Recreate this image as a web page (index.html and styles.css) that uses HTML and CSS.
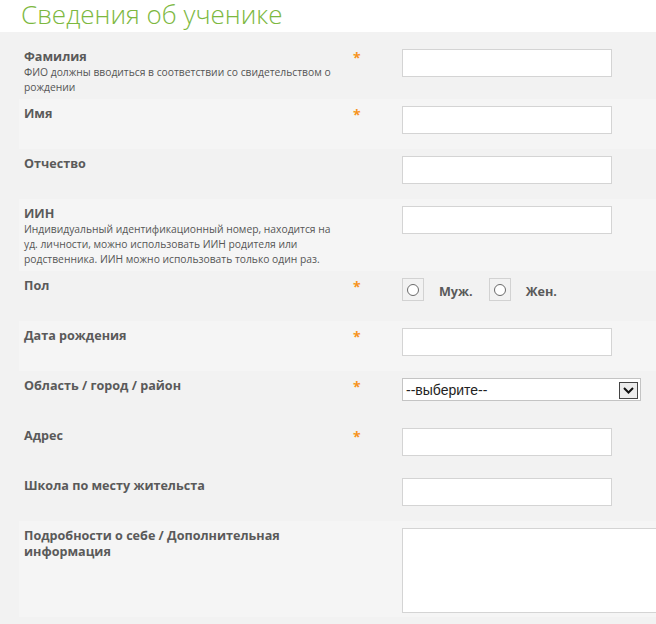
FILE: index.html
```html
<!DOCTYPE html>
<html lang="ru">
<head>
<meta charset="utf-8">
<title>Сведения об ученике</title>
<link rel="stylesheet" href="styles.css">
</head>
<body>
<h1 class="title">Сведения об ученике</h1>
<div class="form">
  <div class="row">
    <div class="lbl"><div class="name">Фамилия</div><div class="hint">ФИО должны вводиться в соответствии со свидетельством о<br>рождении</div></div>
    <div class="req">*</div>
    <div class="field"><input class="text" type="text"></div>
  </div>
  <div class="row alt">
    <div class="lbl"><div class="name">Имя</div></div>
    <div class="req">*</div>
    <div class="field"><input class="text" type="text"></div>
  </div>
  <div class="row">
    <div class="lbl"><div class="name">Отчество</div></div>
    <div class="req"></div>
    <div class="field"><input class="text" type="text"></div>
  </div>
  <div class="row alt">
    <div class="lbl"><div class="name">ИИН</div><div class="hint">Индивидуальный идентификационный номер, находится на<br>уд. личности, можно использовать ИИН родителя или<br>родственника. ИИН можно использовать только один раз.</div></div>
    <div class="req"></div>
    <div class="field"><input class="text" type="text"></div>
  </div>
  <div class="row">
    <div class="lbl"><div class="name">Пол</div></div>
    <div class="req">*</div>
    <div class="field">
      <div class="radios">
        <span class="rbox"><span class="rcircle"></span></span><span class="rtext">Муж.</span>
        <span class="rbox"><span class="rcircle"></span></span><span class="rtext">Жен.</span>
      </div>
    </div>
  </div>
  <div class="row alt">
    <div class="lbl"><div class="name">Дата рождения</div></div>
    <div class="req">*</div>
    <div class="field"><input class="text" type="text"></div>
  </div>
  <div class="row">
    <div class="lbl"><div class="name">Область / город / район</div></div>
    <div class="req">*</div>
    <div class="field">
      <div class="select"><span class="sel-text">--выберите--</span><span class="sel-btn"><svg width="11" height="7" viewBox="0 0 11 7"><path d="M1 1 L5.5 5.5 L10 1" fill="none" stroke="#111" stroke-width="2"/></svg></span></div>
    </div>
  </div>
  <div class="row">
    <div class="lbl"><div class="name">Адрес</div></div>
    <div class="req">*</div>
    <div class="field"><input class="text" type="text"></div>
  </div>
  <div class="row">
    <div class="lbl"><div class="name">Школа по месту жительста</div></div>
    <div class="req"></div>
    <div class="field"><input class="text" type="text"></div>
  </div>
  <div class="row alt">
    <div class="lbl"><div class="name">Подробности о себе / Дополнительная<br>информация</div></div>
    <div class="req"></div>
    <div class="field"><textarea class="area"></textarea></div>
  </div>
</div>
</body>
</html>
```

FILE: styles.css
```css
html, body {
  margin: 0;
  padding: 0;
  overflow: hidden;
  background: #fff;
}
body {
  font-family: "Open Sans", "Noto Sans", sans-serif;
  width: 656px;
}
.title {
  margin: 0;
  padding: 0 0 4px 21px;
  font-family: "Open Sans", sans-serif;
  font-weight: 300;
  font-size: 26px;
  line-height: 28px;
  color: #7db83f;
  white-space: nowrap;
}
.form {
  background: #f2f2f2;
  padding-top: 10px;
  min-height: 640px;
}
.row {
  display: flex;
  margin-left: 19px;
  padding: 7px 0 4px;
}
.row.alt {
  background: #f5f5f5;
}
.lbl {
  width: 325px;
  flex: none;
  padding-left: 5px;
}
.name {
  font-weight: 700;
  font-size: 12.6px;
  line-height: 16px;
  color: #5a5a5a;
  white-space: nowrap;
}
.hint {
  font-size: 10.3px;
  line-height: 15px;
  color: #555;
  white-space: nowrap;
}
.req {
  width: 49px;
  flex: none;
  padding-left: 4px;
  padding-top: 2px;
  color: #f7941d;
  font-weight: 700;
  font-size: 14px;
  line-height: 14px;
}
.field {
  flex: none;
  min-height: 39px;
}
.text {
  display: block;
  box-sizing: border-box;
  width: 210px;
  height: 28px;
  margin: 0;
  padding: 0 4px;
  border: 1px solid #d4d4d4;
  background: #fff;
  outline: none;
}
.radios {
  display: flex;
  align-items: center;
  height: 23px;
}
.rbox {
  box-sizing: border-box;
  width: 22px;
  height: 23px;
  border: 1px solid #d2d2d2;
  display: flex;
  align-items: center;
  justify-content: center;
}
.rcircle {
  box-sizing: border-box;
  width: 12px;
  height: 12px;
  border: 1px solid #6a6a6a;
  border-radius: 50%;
  background: #fff;
}
.rtext {
  font-weight: 700;
  font-size: 12.6px;
  color: #5a5a5a;
  margin-left: 15px;
  margin-right: 16px;
  padding-top: 3px;
}
.select {
  box-sizing: border-box;
  width: 239px;
  height: 23px;
  border: 1px solid #c4c4c4;
  background: #fff;
  display: flex;
  align-items: center;
  justify-content: space-between;
  padding: 0 2px 0 3px;
}
.sel-text {
  font-family: "Liberation Sans", Arial, sans-serif;
  font-size: 14px;
  color: #222;
}
.sel-btn {
  box-sizing: border-box;
  width: 19px;
  height: 17px;
  border: 1px solid #444;
  background: #ececec;
  display: flex;
  align-items: center;
  justify-content: center;
  margin-top: 1px;
}
.area {
  display: block;
  box-sizing: border-box;
  width: 300px;
  height: 85px;
  margin: 0;
  border: 1px solid #d4d4d4;
  background: #fff;
  resize: none;
  outline: none;
}
```
